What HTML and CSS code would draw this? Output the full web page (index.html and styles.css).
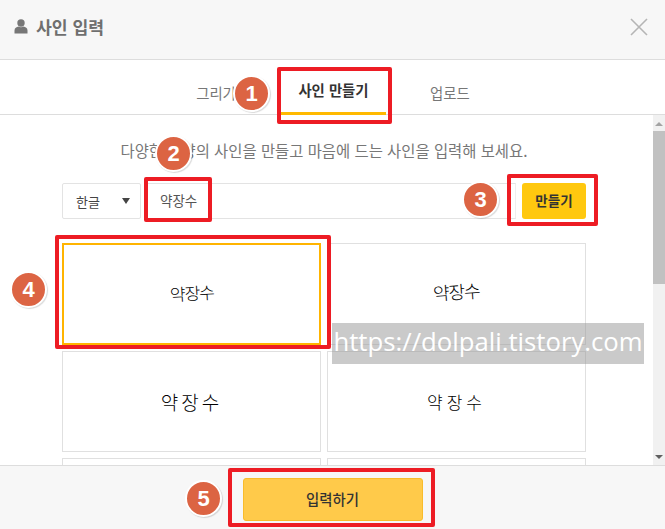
FILE: index.html
```html
<!DOCTYPE html>
<html lang="ko">
<head>
<meta charset="utf-8">
<title>사인 입력</title>
<link rel="stylesheet" href="styles.css">
</head>
<body>
<div class="dialog">
  <header class="head">
    <h1 class="title">
      <svg class="user" viewBox="0 0 14 15" width="14" height="15"><circle cx="7" cy="4" r="3.7" fill="#777"/><path d="M0.5 14.5V11.5C0.5 9 2.5 8 4.5 7.6C6 8.6 8 8.6 9.5 7.6C11.5 8 13.5 9 13.5 11.5V14.5Z" fill="#777"/></svg>
      <span>사인 입력</span>
    </h1>
    <svg class="close" viewBox="0 0 18 18" width="18" height="18"><path d="M1 1L17 17M17 1L1 17" stroke="#b5b5b5" stroke-width="1.6" fill="none"/></svg>
  </header>
  <nav class="tabs">
    <span class="tab first">그리기</span>
    <span class="tab active">사인 만들기</span>
    <span class="tab last">업로드</span>
  </nav>
  <div class="main">
    <div class="content">
      <p class="desc">다양한 모양의 사인을 만들고 마음에 드는 사인을 입력해 보세요.</p>
      <div class="form">
        <div class="select"><span>한글</span><i class="caret"></i></div>
        <div class="input">약장수</div>
        <button class="make">만들기</button>
      </div>
      <div class="grid">
        <div class="cell selected"><span class="sig s1">약장수</span></div>
        <div class="cell"><span class="sig s2">약장수</span></div>
        <div class="cell"><span class="sig s3">약장수</span></div>
        <div class="cell"><span class="sig s4">약장수</span></div>
        <div class="cell"></div>
        <div class="cell"></div>
      </div>
    </div>
    <div class="scrollbar">
      <i class="arrow up"></i>
      <div class="thumb"></div>
      <i class="arrow down"></i>
    </div>
  </div>
  <footer class="foot"><button class="submit">입력하기</button></footer>
</div>

<div class="mark m1"></div>
<div class="mark m2"></div>
<div class="mark m3"></div>
<div class="mark m4"></div>
<div class="mark m5"></div>
<div class="num n1">1</div>
<div class="num n2">2</div>
<div class="num n3">3</div>
<div class="num n4">4</div>
<div class="num n5">5</div>
<div class="watermark">https://dolpali.tistory.com</div>
</body>
</html>
```
FILE: styles.css
```css
* { box-sizing: border-box; }
html, body { margin: 0; padding: 0; }
body {
  width: 665px;
  height: 529px;
  overflow: hidden;
  position: relative;
  background: #fff;
  font-family: "Noto Sans CJK KR", "Noto Sans", sans-serif;
  color: #333;
}
.dialog { display: flex; flex-direction: column; height: 529px; }
.head {
  height: 60px;
  flex: none;
  background: #f7f7f7;
  border-bottom: 1px solid #ddd;
  display: flex;
  align-items: center;
  justify-content: space-between;
  padding: 0 17px 6px 14px;
}
.title {
  margin: 0;
  display: flex;
  align-items: center;
  gap: 8px;
  font-size: 17.2px;
  font-weight: 700;
  color: #6f6f6f;
  line-height: 24px;
}
.tabs {
  height: 55px;
  flex: none;
  border-bottom: 1px solid #ddd;
  display: flex;
  padding-left: 196px;
  font-size: 14.4px;
  color: #777;
}
.tab {
  display: flex;
  align-items: center;
  justify-content: center;
  height: 55px;
  padding-top: 10px;
  line-height: 20px;
  white-space: nowrap;
}
.first { width: 40px; margin-right: 45px; }
.active {
  width: 105px;
  font-weight: 700;
  color: #333;
  border-bottom: 3px solid #ffb900;
  padding-top: 8px;
}
.last { margin-left: 44px; }
.main { flex: 1; min-height: 0; display: flex; }
.content { flex: 1; min-width: 0; overflow: hidden; padding: 0 67px 0 62px; }
.desc {
  margin: 25px 0 0;
  height: 20px;
  line-height: 20px;
  font-size: 15.4px;
  color: #777;
  text-align: center;
  white-space: nowrap;
}
.form { display: flex; margin-top: 23px; height: 36px; }
.select {
  width: 79px;
  border: 1px solid #e3e3e3;
  border-radius: 2px;
  display: flex;
  align-items: center;
  justify-content: space-between;
  padding: 0 10px 0 13px;
  font-size: 13px;
  color: #444;
}
.caret {
  width: 0; height: 0;
  border-left: 4px solid transparent;
  border-right: 4px solid transparent;
  border-top: 6px solid #444;
}
.input {
  flex: 1;
  margin-left: 5px;
  border: 1px solid #e3e3e3;
  border-right-color: #eee;
  display: flex;
  align-items: center;
  padding: 0 0 2px 13px;
  font-size: 13.5px;
  color: #555;
}
.make {
  width: 64px;
  margin-left: 6px;
  border: 0;
  border-radius: 3px;
  background: #ffc80f;
  font-family: inherit;
  font-size: 13.5px;
  font-weight: 700;
  color: #333;
  padding: 0 0 2px;
}
.grid {
  margin-top: 24px;
  display: grid;
  grid-template-columns: 259px 259px;
  grid-auto-rows: 101.5px;
  gap: 6px;
}
.cell {
  border: 1px solid #e0e0e0;
  display: flex;
  align-items: center;
  justify-content: center;
}
.cell.selected { border: 2px solid #ffb400; }
.sig { color: #000; font-weight: 300; white-space: nowrap; line-height: 1; }
.s1 { font-size: 17px; letter-spacing: -1px; transform: rotate(-3deg) translateY(-1px); }
.s2 { font-size: 18px; letter-spacing: -1px; transform: rotate(-4deg) translateY(-3px); }
.s3 { font-size: 19px; letter-spacing: 3px; }
.s4 { font-size: 17px; letter-spacing: 4px; }
.scrollbar {
  width: 12px;
  flex: none;
  background: #f1f1f1;
  display: flex;
  flex-direction: column;
  align-items: center;
  padding: 7px 0 6px;
}
.thumb { width: 12px; height: 153px; margin-top: 5px; background: #c1c1c1; }
.arrow { width: 0; height: 0; border-left: 4px solid transparent; border-right: 4px solid transparent; }
.arrow.up { border-bottom: 4px solid #a3a3a3; }
.arrow.down { border-top: 4px solid #606060; margin-top: auto; }
.foot {
  height: 64px;
  flex: none;
  background: #f7f7f7;
  border-top: 1px solid #ddd;
  display: flex;
  justify-content: center;
  padding-top: 12px;
}
.submit {
  width: 180px;
  height: 43px;
  border: 1px solid #f9bc2b;
  border-radius: 3px;
  background: #ffca4a;
  font-family: inherit;
  font-size: 14.4px;
  font-weight: 500;
  color: #333;
  padding: 0 0 2px;
}
.mark { position: absolute; border: 4px solid #ed1c24; border-radius: 2px; }
.m1 { left: 277px; top: 67px; width: 115px; height: 57px; }
.m2 { left: 144px; top: 177px; width: 68px; height: 45px; }
.m3 { left: 507px; top: 174px; width: 91px; height: 52px; }
.m4 { left: 55px; top: 235px; width: 276px; height: 114px; }
.m5 { left: 228px; top: 468px; width: 207px; height: 59px; }
.num {
  position: absolute;
  width: 37px;
  height: 37px;
  border-radius: 50%;
  background: #dc6443;
  border: 2px solid #fff;
  box-shadow: 1px 1px 1px rgba(0,0,0,.15);
  color: #fff;
  font-family: "Liberation Sans", Arial, sans-serif;
  font-size: 22px;
  font-weight: 700;
  display: flex;
  align-items: center;
  justify-content: center;
}
.n1 { left: 233px; top: 75px; }
.n2 { left: 155px; top: 135px; }
.n3 { left: 462px; top: 181px; }
.n4 { left: 10px; top: 271px; }
.n5 { left: 185px; top: 480px; }
.watermark {
  position: absolute;
  left: 332px;
  top: 323px;
  width: 312px;
  height: 41px;
  background: rgba(150,150,150,.5);
  color: #fff;
  font-family: "Open Sans", sans-serif;
  font-size: 25.7px;
  line-height: 37px;
  white-space: nowrap;
  overflow: hidden;
  text-align: center;
}
```
